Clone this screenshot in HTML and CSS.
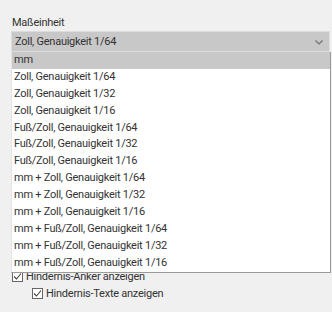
FILE: index.html
```html
<!DOCTYPE html>
<html lang="de">
<head>
    <meta charset="UTF-8">
    <title>Maßeinheit</title>
    <link rel="stylesheet" href="styles.css">
</head>
<body>
    <div class="panel">
        <div class="field-label">Maßeinheit</div>

        <!-- Combo box with its open list -->
        <div class="combo">
            <div class="combo-box">
                <span class="combo-text">Zoll, Genauigkeit 1/64</span>
                <svg class="chevron" width="8" height="5" viewBox="0 0 8 5">
                    <path d="M0.5 0.5 L4 4 L7.5 0.5" fill="none" stroke="#707070" stroke-width="1.2"/>
                </svg>
            </div>
            <ul class="combo-list">
                <li class="selected">mm</li>
                <li>Zoll, Genauigkeit 1/64</li>
                <li>Zoll, Genauigkeit 1/32</li>
                <li>Zoll, Genauigkeit 1/16</li>
                <li>Fuß/Zoll, Genauigkeit 1/64</li>
                <li>Fuß/Zoll, Genauigkeit 1/32</li>
                <li>Fuß/Zoll, Genauigkeit 1/16</li>
                <li>mm + Zoll, Genauigkeit 1/64</li>
                <li>mm + Zoll, Genauigkeit 1/32</li>
                <li>mm + Zoll, Genauigkeit 1/16</li>
                <li>mm + Fuß/Zoll, Genauigkeit 1/64</li>
                <li>mm + Fuß/Zoll, Genauigkeit 1/32</li>
                <li>mm + Fuß/Zoll, Genauigkeit 1/16</li>
            </ul>
        </div>

        <!-- Options (partly hidden below the open list) -->
        <div class="options">
            <label class="check">
                <span class="box">
                    <svg width="9" height="9" viewBox="0 0 9 9">
                        <path d="M1 4.5 L3.5 7 L8 1.5" fill="none" stroke="#444" stroke-width="1.1"/>
                    </svg>
                </span>
                Hindernis-Anker anzeigen
            </label>
            <label class="check indent">
                <span class="box">
                    <svg width="9" height="9" viewBox="0 0 9 9">
                        <path d="M1 4.5 L3.5 7 L8 1.5" fill="none" stroke="#444" stroke-width="1.1"/>
                    </svg>
                </span>
                Hindernis-Texte anzeigen
            </label>
        </div>
    </div>
</body>
</html>
```

FILE: styles.css
```css
body {
    margin: 0;
    background-color: #f0f0f0;
    font-family: Roboto, "Liberation Sans", sans-serif;
    font-size: 11px;
    letter-spacing: -0.25px;
    color: #333;
}

.panel {
    padding: 15px 0 0 11px;
    height: 297px;
    position: relative;
}

.field-label {
    height: 16px;
    line-height: 16px;
    padding-left: 1px;
}

/* Combo box */
.combo {
    position: relative;
    width: 319px;
}

.combo-box {
    box-sizing: border-box;
    height: 21px;
    border: 1px solid #dcdcdc;
    background-color: #c8c8c8;
    display: flex;
    align-items: center;
    justify-content: space-between;
    padding: 1px 6px 0 3px;
}

.combo-text {
    line-height: 18px;
}

.chevron {
    display: block;
}

.combo-list {
    position: absolute;
    top: 21px;
    left: 0;
    width: 320px;
    box-sizing: border-box;
    margin: 0;
    padding: 0;
    list-style: none;
    background-color: #fff;
    border-left: 1px solid #e3e3e3;
    border-right: 1px solid #9a9a9a;
    border-bottom: 1px solid #9a9a9a;
    z-index: 2;
}

.combo-list li {
    height: 16.9px;
    line-height: 16.9px;
    padding-left: 2px;
    white-space: nowrap;
}

.combo-list li.selected {
    background-color: #c8c8c8;
}

/* Check boxes */
.options {
    margin-top: 216px;
    display: flex;
    flex-direction: column;
}

.check {
    display: flex;
    align-items: center;
    gap: 3px;
    height: 17px;
    margin-left: 1px;
}

.check.indent {
    margin-left: 21px;
}

.box {
    box-sizing: border-box;
    width: 11px;
    height: 11px;
    border: 1px solid #666;
    background-color: #fff;
    display: flex;
    align-items: center;
    justify-content: center;
}

.box svg {
    display: block;
}
```
